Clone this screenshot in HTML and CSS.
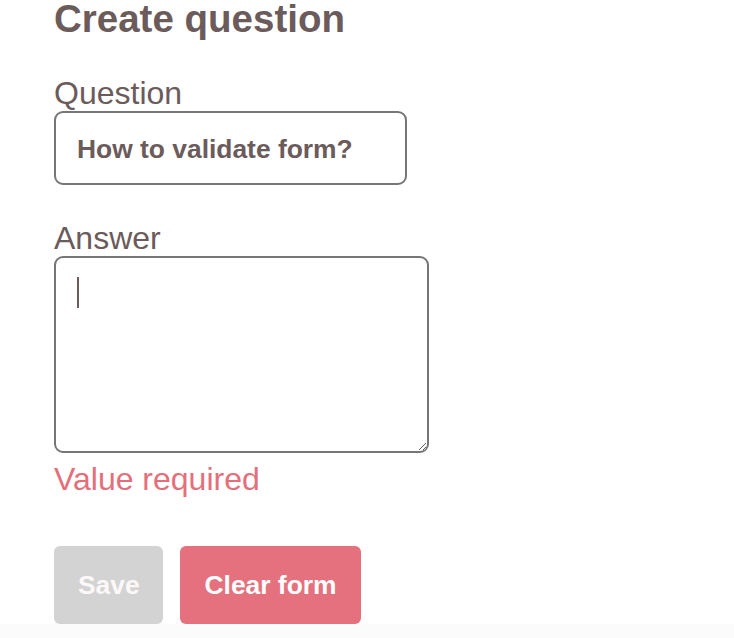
FILE: index.html
```html
<!DOCTYPE html>
<html lang="en">
<head>
<meta charset="utf-8">
<title>Create question</title>
<link rel="stylesheet" href="styles.css">
</head>
<body>
<form class="form">
  <h1 class="title">Create question</h1>
  <label class="field">
    <span class="label">Question</span>
    <input class="input" type="text" value="How to validate form?">
  </label>
  <label class="field field-answer">
    <span class="label">Answer</span>
    <span class="area-wrap">
      <textarea class="area"></textarea>
      <span class="caret" aria-hidden="true"></span>
    </span>
  </label>
  <div class="error">Value required</div>
  <div class="actions">
    <button class="btn btn-save" type="button" disabled>Save</button>
    <button class="btn btn-clear" type="button">Clear form</button>
  </div>
</form>
</body>
</html>
```
FILE: styles.css
```css
html {
  background: #fbfbfb;
}
body {
  margin: 0;
  background: #ffffff;
  font-family: "Liberation Sans", Arial, Helvetica, sans-serif;
  color: #6b5b5b;
}
.form {
  display: flex;
  flex-direction: column;
  align-items: flex-start;
  padding-left: 54px;
}
.title {
  margin: 0;
  font-size: 38.5px;
  line-height: 40px;
  margin-top: -1px;
  margin-bottom: -1px;
  font-weight: 700;
}
.field {
  display: flex;
  flex-direction: column;
  align-items: flex-start;
  margin-top: 39px;
}
.field-answer {
  margin-top: 37px;
}
.label {
  font-size: 32px;
  line-height: 32px;
  margin-bottom: 2px;
}
.input {
  box-sizing: border-box;
  width: 353px;
  height: 74px;
  margin: 0;
  padding: 3px 20px 0 21px;
  border: 2px solid #767676;
  border-radius: 9px;
  font-family: inherit;
  font-size: 26.4px;
  font-weight: 700;
  color: #6b5b5b;
  background: #fff;
  outline: none;
}
.area-wrap {
  position: relative;
  display: block;
}
.area {
  display: block;
  box-sizing: border-box;
  width: 375px;
  height: 197px;
  margin: 0;
  padding: 19px 21px;
  border: 2px solid #767676;
  border-radius: 9px;
  font-family: inherit;
  font-size: 26.4px;
  color: #6b5b5b;
  background: #fff;
  outline: none;
}
.caret {
  position: absolute;
  left: 23px;
  top: 21px;
  width: 1.5px;
  height: 31px;
  background: #6b5b5b;
}
.error {
  margin-top: 10px;
  font-size: 32px;
  line-height: 32px;
  color: #e46f7b;
}
.actions {
  display: flex;
  gap: 17px;
  margin-top: 51px;
}
.btn {
  height: 78px;
  margin: 0;
  padding: 0 24px;
  border: none;
  border-radius: 6px;
  font-family: inherit;
  font-size: 26.4px;
  font-weight: 700;
  color: #ffffff;
}
.btn-save {
  background: #d3d3d3;
  color: #fcf8f8;
  width: 109px;
}
.btn-clear {
  background: #e4717d;
  width: 181px;
}
```
